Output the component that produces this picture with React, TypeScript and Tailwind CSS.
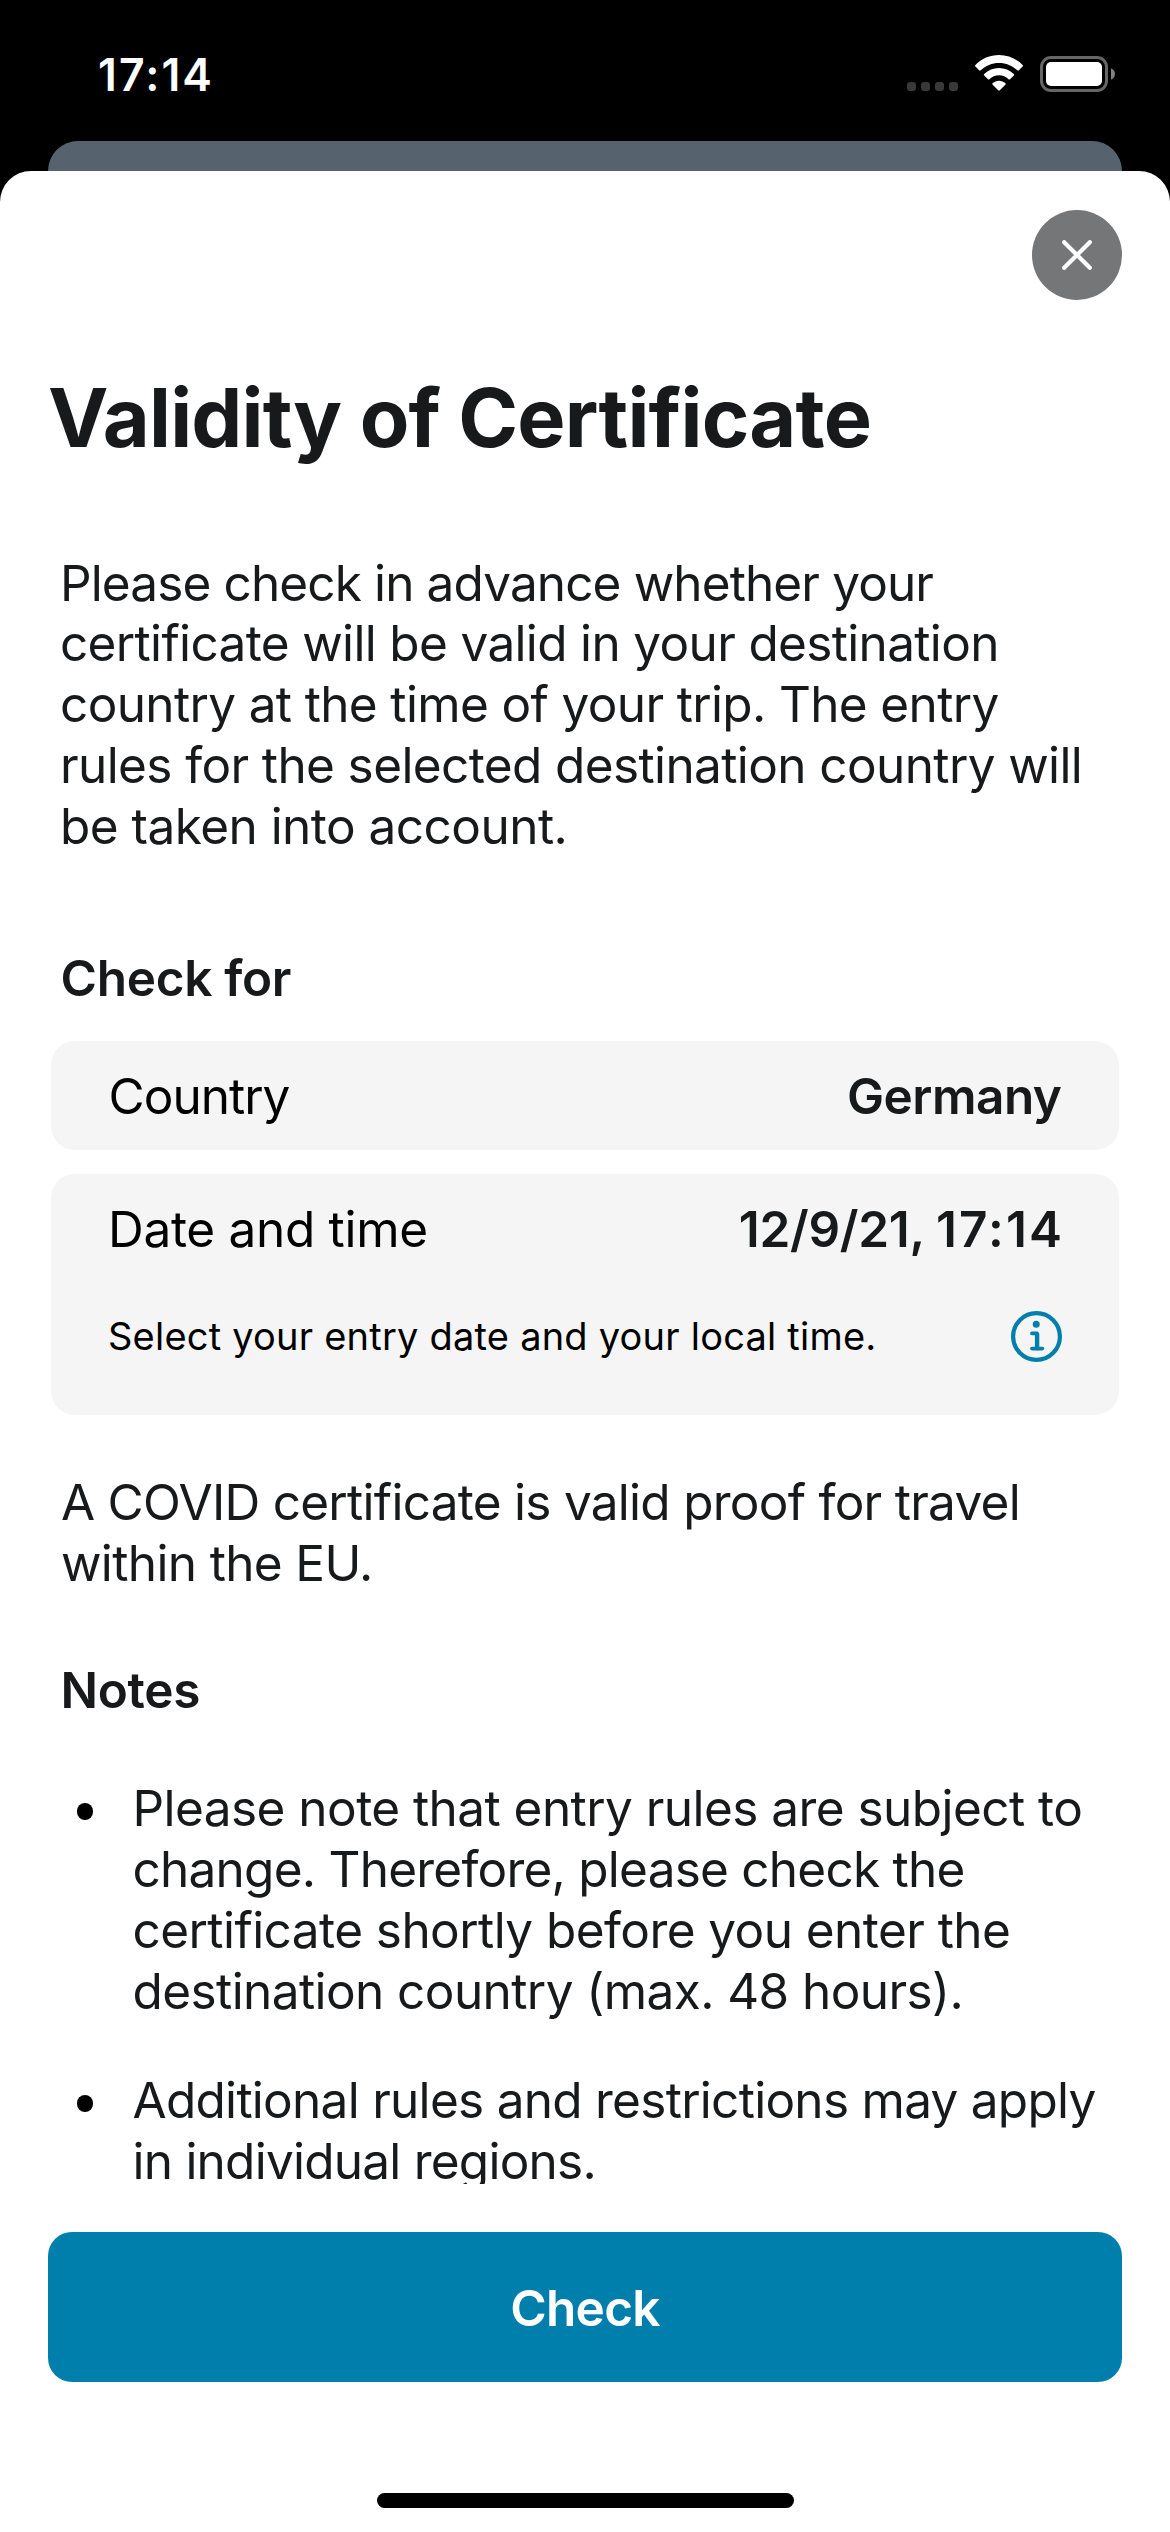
import type { ReactNode } from "react";

function Line({ className, children }: { className: string; children: ReactNode }) {
  return <span className={`block whitespace-nowrap ${className}`}>{children}</span>;
}

function WifiIcon() {
  return (
    <svg viewBox="0 0 48 36" className="h-9 w-12" fill="#fff">
      <path d="M24 0C33 0 41.4 3.7 47.6 9.9c.5.5.5 1.2 0 1.7l-3.7 3.7c-.5.5-1.1.5-1.6 0C37.4 10.7 31 8 24 8S10.6 10.7 5.7 15.3c-.5.5-1.1.5-1.6 0L.4 11.6c-.5-.5-.5-1.2 0-1.7C6.6 3.7 15 0 24 0Z" />
      <path d="M24 13C29.7 13 34.9 15.2 38.8 18.9c.5.5.5 1.2 0 1.7l-3.8 3.7c-.4.4-1.1.4-1.5 0C31 21.8 27.6 20.3 24 20.3s-7 1.5-9.5 4c-.4.4-1.1.4-1.5 0l-3.8-3.7c-.5-.5-.5-1.2 0-1.7C13.1 15.2 18.3 13 24 13Z" />
      <path d="M24 25.7c2.4 0 4.6.9 6.3 2.4.5.5.5 1.2 0 1.7l-5.5 5.5c-.4.5-1.2.5-1.6 0l-5.5-5.5c-.5-.5-.5-1.2 0-1.7 1.7-1.5 3.9-2.4 6.3-2.4Z" />
    </svg>
  );
}

function BatteryIcon() {
  return (
    <svg viewBox="0 0 76 36" className="h-9 w-[76px]">
      <rect x="1.5" y="1.5" width="65" height="33" rx="9.5" fill="none" stroke="#666" strokeWidth="3" />
      <rect x="6" y="6" width="56" height="24" rx="5" fill="#fff" />
      <path d="M71 12.3c2.4.9 4 3.1 4 5.7s-1.6 4.8-4 5.7Z" fill="#808080" />
    </svg>
  );
}

function InfoIcon() {
  return (
    <svg viewBox="0 0 51 51" className="size-[51px]" fill="none" stroke="#007fad">
      <circle cx="25.5" cy="25.5" r="23.4" strokeWidth="4.2" />
      <circle cx="25.2" cy="13.3" r="3.5" fill="#007fad" stroke="none" />
      <path d="M20.9 22.4h5.2v15.2" strokeWidth="3.6" strokeLinecap="round" strokeLinejoin="round" />
      <path d="M26.1 22.4v15" strokeWidth="4.4" />
      <path d="M20.9 37.6h10.5" strokeWidth="3.6" strokeLinecap="round" />
    </svg>
  );
}

function StatusBar() {
  return (
    <header className="flex h-[141px] items-start justify-between pl-[98px] pr-[54px]">
      <span className="mt-12 text-[44.5px] font-semibold leading-[54px] tracking-[2.1px] text-white">17:14</span>
      <div className="mt-[55px] flex items-start">
        <div className="mr-[17px] mt-[27px] flex gap-[5px]">
          {[0, 1, 2, 3].map((i) => (
            <span key={i} className="size-[9px] rounded-[3px] bg-[#393939]" />
          ))}
        </div>
        <WifiIcon />
        <div className="ml-[17px] mt-px">
          <BatteryIcon />
        </div>
      </div>
    </header>
  );
}

function Note({ className, children }: { className?: string; children: ReactNode }) {
  return (
    <li className={`flex items-start pl-[76.5px] ${className ?? ""}`}>
      <span className="mr-[39.5px] mt-[25.5px] size-[16.5px] shrink-0 rounded-full bg-black" />
      <div>{children}</div>
    </li>
  );
}

export default function App() {
  return (
    <div className="h-[2532px] w-[1170px] overflow-hidden bg-black font-['Inter',sans-serif] text-[49.5px] leading-[60.9px] text-[#17191a]">
      <StatusBar />
      <div className="mx-12 h-[30px] rounded-t-[30px] bg-[#56636f]" />
      <main className="flex h-[2361px] flex-col rounded-t-[31px] bg-white">
        <div className="h-[2013px] overflow-hidden">
          <div className="flex justify-end pr-12 pt-[39px]">
            <button aria-label="Close" className="flex size-[90px] items-center justify-center rounded-full bg-[#757678]">
              <svg viewBox="0 0 30 30" className="size-[30px]" stroke="#fff" strokeWidth="4.2" strokeLinecap="round">
                <path d="M2.2 2.2 27.8 27.8M27.8 2.2 2.2 27.8" />
              </svg>
            </button>
          </div>
          <h1 className="ml-12 mt-[67.5px] whitespace-nowrap text-[81px] font-bold leading-[100px] tracking-[-0.82px]">
            Validity of Certificate
          </h1>
          <p className="ml-[60px] mt-[85px]">
            <Line className="tracking-[-0.874px]">Please check in advance whether your</Line>
            <Line className="tracking-[-0.655px]">certificate will be valid in your destination</Line>
            <Line className="tracking-[-0.64px]">country at the time of your trip. The entry</Line>
            <Line className="tracking-[-0.61px]">rules for the selected destination country will</Line>
            <Line className="tracking-[-0.53px]">be taken into account.</Line>
          </p>
          <h2 className="ml-[60.5px] mt-[90.5px] font-semibold leading-[60px] tracking-[-0.3px]">Check for</h2>

          <div className="mx-[51px] mt-[33px] flex flex-col gap-6 leading-[60px]">
            <div className="flex h-[109px] items-center justify-between rounded-[24px] bg-[#f5f5f5] pl-[57.5px] pr-[57.5px] pt-px">
              <span className="tracking-[-0.98px] text-black">Country</span>
              <span className="font-semibold tracking-[-0.5px]">Germany</span>
            </div>
            <div className="h-[241px] rounded-[24px] bg-[#f5f5f5] pl-[57px] pr-[57px] pt-[25px]">
              <div className="flex justify-between">
                <span className="tracking-[-0.3px] text-black">Date and time</span>
                <span className="-mr-[2px] font-semibold tracking-[-0.3px]">
                  12/9/21, <span className="tracking-[2.1px]">17:14</span>
                </span>
              </div>
              <div className="mt-[52px] flex items-center justify-between">
                <span className="text-[38px] leading-[48px] tracking-[0.22px] text-black">
                  Select your entry date and your local time.
                </span>
                <InfoIcon />
              </div>
            </div>
          </div>

          <p className="ml-[61px] mt-[57.5px]">
            <Line className="tracking-[-0.727px]">A COVID certificate is valid proof for travel</Line>
            <Line className="tracking-[-0.64px]">within the EU.</Line>
          </p>
          <h2 className="ml-[60.5px] mt-[66.5px] font-semibold leading-[60px] tracking-[-0.3px]">Notes</h2>
          <ul className="mt-[57.5px]">
            <Note>
              <Line className="tracking-[-0.55px]">Please note that entry rules are subject to</Line>
              <Line className="tracking-[-0.756px]">change. Therefore, please check the</Line>
              <Line className="tracking-[-0.564px]">certificate shortly before you enter the</Line>
              <Line className="tracking-[-0.58px]">destination country (max. 48 hours).</Line>
            </Note>
            <Note className="mt-[48.5px]">
              <Line className="tracking-[-0.72px]">Additional rules and restrictions may apply</Line>
              <Line className="tracking-[-0.757px]">in individual regions.</Line>
            </Note>
          </ul>
        </div>
        <button className="mx-12 mt-12 flex h-[150px] items-center justify-center rounded-[24px] bg-[#007fad] pt-0.5 font-semibold leading-[60px] tracking-[-0.7px] text-white">
          Check
        </button>
        <div className="mx-auto mt-[111px] h-[15px] w-[417px] rounded-full bg-black" />
      </main>
    </div>
  );
}
